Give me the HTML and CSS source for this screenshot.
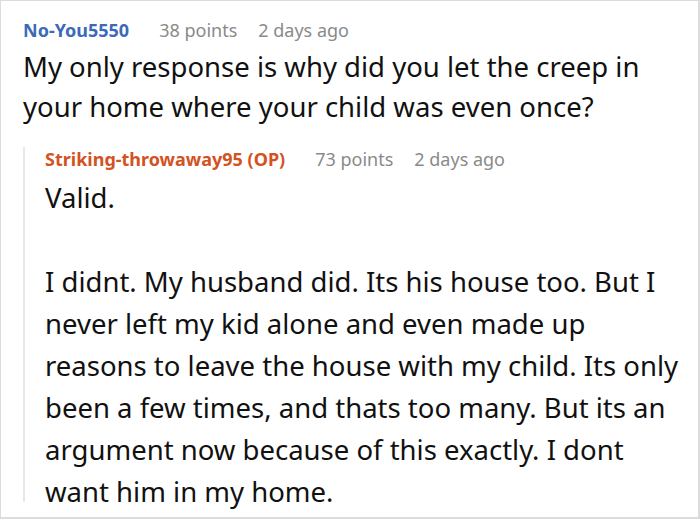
FILE: index.html
```html
<!DOCTYPE html>
<html>
<head>
<meta charset="utf-8">
<link rel="stylesheet" href="styles.css">
</head>
<body>
<div class="frame">
  <div class="comment">
    <div class="meta">
      <span class="user user-blue">No-You5550</span>
      <span class="points">38 points</span>
      <span class="time">2 days ago</span>
    </div>
    <div class="body body-top">
      <p>My only response is why did you let the creep in your home where your child was even once?</p>
    </div>
    <div class="reply">
      <div class="meta">
        <span class="user user-op">Striking-throwaway95 (OP)</span>
        <span class="points">73 points</span>
        <span class="time">2 days ago</span>
      </div>
      <div class="body body-reply">
        <p>Valid.</p>
        <p class="para">I didnt. My husband did. Its his house too. But I never left my kid alone and even made up reasons to leave the house with my child. Its only been a few times, and thats too many. But its an argument now because of this exactly. I dont want him in my home.</p>
      </div>
    </div>
  </div>
</div>
</body>
</html>
```
FILE: styles.css
```css
html, body {
  margin: 0;
  padding: 0;
  background: #fff;
}
.frame {
  box-sizing: border-box;
  width: 700px;
  height: 519px;
  border: 1px solid #dcdcdc;
  border-right-width: 2px;
  border-bottom-width: 2px;
  overflow: hidden;
  font-family: "Noto Sans", "Open Sans", sans-serif;
  color: #111;
}
.comment {
  padding: 17px 0 0 22px;
}
.meta {
  display: flex;
  align-items: baseline;
  font-size: 18px;
  line-height: 24px;
  color: #8a8a8a;
}
.user {
  font-weight: 700;
  font-size: 18px;
  margin-right: 30px;
}
.user-blue { color: #3a6ab8; }
.user-op { color: #d4521f; }
.points { margin-right: 21px; }
.body p {
  margin: 0;
  font-size: 27.5px;
}
.body-top {
  margin-top: 5px;
  line-height: 40px;
  padding-right: 40px;
}
.body-reply {
  margin-top: 6px;
  margin-bottom: -11px;
  line-height: 42px;
  padding-right: 12px;
}
.body-reply .para {
  margin-top: 42px;
}
.reply {
  display: flow-root;
  margin-top: 20px;
  border-left: 2px solid #e8e8e8;
  padding-left: 20px;
}
```
